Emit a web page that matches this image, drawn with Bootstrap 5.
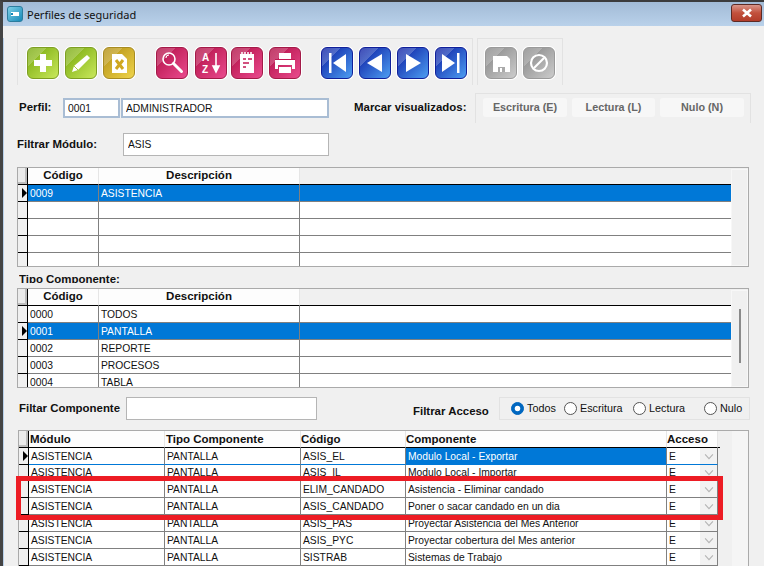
<!DOCTYPE html>
<html lang="es">
<head>
<meta charset="utf-8">
<title>Perfiles de seguridad</title>
<link href="https://cdn.jsdelivr.net/npm/bootstrap@5.3.0/dist/css/bootstrap.min.css" rel="stylesheet">
<style>
html,body{margin:0;background:#f0f0f0;}
body{font-family:"Liberation Sans",Arial,sans-serif;font-size:10.3px;color:#111;overflow:hidden;}
.win{width:764px;height:566px;overflow:hidden;position:relative;background:#f0f0f0;border-top:2px solid #3c3c3c;border-left:3px solid #444;}
.ttl{height:24px;background:linear-gradient(#a2bbd6,#b9d1ea);padding:0 2px 0 4px;}
.ttl-ic{width:16px;height:16px;border-radius:3px;background:linear-gradient(135deg,#7fd0e6,#1689b8);border:1px solid #2c7d9e;}
.ttl-tx{font-family:"Noto Sans",sans-serif;font-size:11px;margin:2px 0 0 4px;color:#111;}
.x-btn{width:31px;height:18px;margin-top:-3px;border-radius:3px;border:1px solid #5d2a24;background:linear-gradient(#d9968a,#c2503c 50%,#b23c2a);padding:0;line-height:0;}
.body-a{border-left:1px solid #b9d1ea;height:540px;}
.tb-wrap{margin:12px 0 0 13px;gap:4px;height:47px;}
.tb-grp{border:2px solid #e2e2e2;border-width:1px 1px 0 1px;padding:8px 0 0 9px;height:47px;}
.g1{width:456px;}.g2{width:86px;padding-left:7px;}
.tbb{width:32px;height:32px;padding:0;border-radius:6px;line-height:0;flex:none;box-shadow:0 0 0 1px #fff;}
.tbb svg{display:block;width:30px;height:30px;}
.tg{background:linear-gradient(135deg,rgba(255,255,255,.22) 0 30%,transparent 31%),linear-gradient(135deg,#76a80a,#c9e85c);border:1px solid #7e9f22;}
.ty{background:linear-gradient(135deg,rgba(255,255,255,.2) 0 30%,transparent 31%),linear-gradient(135deg,#b28e12,#efd44c);border:1px solid #a88c22;}
.tp{background:linear-gradient(135deg,rgba(255,255,255,.2) 0 30%,transparent 31%),linear-gradient(135deg,#b10f45,#ea4b8e);border:1px solid #a31a48;}
.tb{background:linear-gradient(135deg,rgba(255,255,255,.22) 0 30%,transparent 31%),linear-gradient(135deg,#0c1ca2,#4d9ef2);border:1px solid #10209a;}
.tn{background:linear-gradient(135deg,rgba(255,255,255,.22) 0 30%,transparent 31%),linear-gradient(135deg,#858585,#cccccc);border:1px solid #9a9a9a;}
.m7{margin-left:7px;}.m4{margin-left:4px;}.m6{margin-left:6px;}.m21{margin-left:21px;}.m20{margin-left:20px;}
.lbl{font-weight:700;font-size:11.45px;color:#111;white-space:nowrap;}
.r-perf{margin:8px 0 0 15px;height:30px;}
.w44{width:44px;}
.fc{height:20px;min-height:0;border-radius:0;padding:0 3px;font-size:10.3px;line-height:16px;color:#111;background:#fff;font-family:inherit;}
.fc-a{border:2px solid #a9bdd4;}
.i1{width:57px;}.i2{width:208px;margin-left:1px;}
.marc{margin-left:25px;width:121px;}
.mbox{width:276px;height:30px;border:1px solid #e2e2e2;border-bottom:0;padding:4px 6px 0 7px;gap:5px;align-items:flex-start;}
.mbtn{height:19px;padding:0;border:0;border-radius:3px;background:#f7f7f7;color:#666;font-size:10.8px;font-weight:700;line-height:19px;font-family:inherit;}
.mb1{width:84px;}.mb2{width:83px;}.mb3{width:84px;}
.r-fm{margin:10px 0 0 13px;height:23px;}
.w106{width:106px;padding-top:1px;}
.i3{width:206px;height:23px;border:1px solid #b5b5b5;padding:0 4px;}
.gr{margin:11px 0 0 13px;width:732px;height:100px;border:1px solid #aaa;background:#f0f0f0;overflow:hidden;}
.gtw{width:713px;flex:none;overflow:hidden;}
.sbar{width:17px;flex:none;border:1px solid #f7f7f7;position:relative;margin-top:1px;}
.thumb{position:absolute;left:7px;top:18px;width:2px;height:54px;background:#8a8a8a;}
table.gd{table-layout:fixed;border-collapse:separate;border-spacing:0;margin:0;width:713px;--bs-table-bg:transparent;}
table.gd th,table.gd td{height:17px;padding:1px 0 0 2px;line-height:15px;font-size:10.3px;color:#111;white-space:nowrap;overflow:hidden;background:#fff;border:0;border-right:1px solid #808080;border-bottom:1px solid #808080;box-shadow:none;font-weight:400;}
table.gd th{font-size:11.5px;font-weight:700;background:#fdfdfd;border-right:1px solid #e6e6e6;border-bottom:1px solid #000;padding:0 0 2px 0;line-height:14px;}
table.gd th.rst{background:#f0f0f0;border-right:0;}
table.gd td.rst{border-right:0;}
table.gd th.ind{background:#ebebeb;border-right:1px solid #000;border-bottom:1px solid #000;box-shadow:inset -2px -2px 0 #bdbdbd;}
table.gd td.ind{background:#f0f0f0;border-right:1px solid #000;border-bottom:1px solid #000;padding:0;position:relative;}
table.gd tr.sel td:not(.ind){background:#0078d7;color:#fff;}
table.gd td.sel-c{background:#0078d7;color:#fff;}
.arr{position:absolute;right:0;top:3px;width:0;height:0;border-left:5px solid #000;border-top:5px solid transparent;border-bottom:5px solid transparent;}
.lb2{margin:5px 0 0 15px;height:11px;line-height:15px;overflow:hidden;}
.mt5a{margin-top:5px;}
.r-fl{margin:9px 0 0 15px;height:24px;}
.w107{width:107px;padding-top:3px;}
.i4{width:191px;height:23px;border:1px solid #b5b5b5;}
.fa-l{margin-left:96px;width:86px;padding-top:6px;}
.rbox{width:251px;height:23px;border:1px solid #e2e2e2;padding-left:11px;font-size:10.8px;position:relative;}
.rb{position:relative;display:inline-flex;align-items:center;gap:3px;height:21px;color:#111;white-space:nowrap;}
.rb .form-check-input{width:13px;height:13px;margin:0;flex:none;border:1px solid #555;background-color:#fff;}
.rb .form-check-input:checked{background-color:#0067c0;border-color:#0067c0;}
.w60{width:53px;}.w69{width:69px;}.w71{width:71px;}
.gr3{margin:9px 0 0 14px;width:731px;height:140px;border:1px solid #aaa;}
.gt3{width:701px;flex:none;overflow:hidden;}
.sb3{width:18px;flex:none;background:#f5f5f5;margin-left:12px;}
table.g3{width:701px;}
table.g3 td{padding-left:2px;}
table.g3 th{padding:0 0 0 1px;line-height:15px;text-align:left;}
table.g3 th:nth-child(n+4){padding-left:0;}
table.g3 th.pad{background:#f0f0f0;border-right:0;padding:0;}
table.g3 td.pad{background:#f0f0f0;border:0;padding:0;}
table.g3 tr.cur td:not(.ind):not(.pad){border-bottom-color:#0078d7;}
table.g3 tr.low td{height:16px;line-height:14px;}
table.g3 td.acc{position:relative;padding-left:2px;}
.cmb{position:absolute;right:0;top:0;bottom:0;width:17px;background:#f2f2f2;display:flex;align-items:center;justify-content:center;}
.cmb svg{width:10px;height:7px;}
.redb{position:absolute;left:13px;top:474px;width:707px;height:44px;border:5px solid #ed1c24;pointer-events:none;}
</style>
</head>
<body>
<div class="win">
  <div class="ttl d-flex align-items-center">
    <span class="ttl-ic d-flex align-items-center justify-content-center"><svg width="10" height="6" viewBox="0 0 10 6"><rect x="1" y="1" width="8" height="4" fill="#fff"/><rect x="1" y="2" width="2" height="2" fill="#1689b8"/></svg></span>
    <span class="ttl-tx">Perfiles de seguridad</span>
    <button class="x-btn ms-auto" aria-label="Cerrar"><svg width="14" height="10" viewBox="0 0 14 10"><path d="M3 1.500l8 7M11 1.500l-8 7" stroke="#fff" stroke-width="2.600" fill="none"/></svg></button>
  </div>
  <div class="body-a">
    <div class="d-flex tb-wrap">
      <div class="tb-grp g1 d-flex">
        <button class="btn tbb tg"><svg viewBox="0 0 30 30"><path d="M12 6h6v6h6v6h-6v6h-6v-6H6v-6h6z" fill="#fff"/></svg></button>
        <button class="btn tbb tg m6"><svg viewBox="0 0 30 30"><path d="M21 7l3 3-12 12-6 2 2-6z" fill="#fff"/><path d="M8 18l4 4" stroke="#a8cc3c" stroke-width="1"/></svg></button>
        <button class="btn tbb ty m6"><svg viewBox="0 0 30 30"><path d="M8 6h10l5 5v14H8z" fill="#fff"/><path d="M12 12l7 9M19 12l-7 9" stroke="#d0a820" stroke-width="3"/></svg></button>
        <button class="btn tbb tp m21"><svg viewBox="0 0 30 30"><circle cx="12" cy="11" r="6" fill="none" stroke="#fff" stroke-width="1.600"/><path d="M16.500 15.500l8 8" stroke="#fff" stroke-width="3" stroke-linecap="round"/><path d="M9 10a3 3 0 0 1 3-3" stroke="#fff" fill="none"/></svg></button>
        <button class="btn tbb tp m7"><svg viewBox="0 0 30 30"><text x="6" y="13" font-family="Liberation Sans" font-weight="700" font-size="10" fill="#fff">A</text><text x="6" y="25" font-family="Liberation Sans" font-weight="700" font-size="10" fill="#fff">Z</text><path d="M20 5v15M17 18l3 6 3-6z" stroke="#fff" stroke-width="1.600" fill="#fff"/></svg></button>
        <button class="btn tbb tp m4"><svg viewBox="0 0 30 30"><path d="M8 6h14v19H8z" fill="#fff"/><path d="M10 4v4M13 4v4M16 4v4M19 4v4" stroke="#fff" stroke-width="1.500"/><path d="M11 11h3M16 11h4M11 15h6M11 19h3" stroke="#c21a55" stroke-width="1.500"/></svg></button>
        <button class="btn tbb tp m6"><svg viewBox="0 0 30 30"><path d="M9 5h12v6H9z" fill="#fff"/><path d="M5 12h20v9h-3v-4H8v4H5z" fill="#fff"/><path d="M9 19h12v6H9z" fill="#fff"/><path d="M5 11.500h20" stroke="#c21a55"/></svg></button>
        <button class="btn tbb tb m20"><svg viewBox="0 0 30 30"><path d="M7 5h2.500v20H7z" fill="#fff"/><path d="M24 6v18L11 15z" fill="#fff"/></svg></button>
        <button class="btn tbb tb m6"><svg viewBox="0 0 30 30"><path d="M22 6v18L7 15z" fill="#fff"/></svg></button>
        <button class="btn tbb tb m6"><svg viewBox="0 0 30 30"><path d="M8 6v18l15-9z" fill="#fff"/></svg></button>
        <button class="btn tbb tb m6"><svg viewBox="0 0 30 30"><path d="M21 5h2.500v20H21z" fill="#fff"/><path d="M6 6v18l13-9z" fill="#fff"/></svg></button>
      </div>
      <div class="tb-grp g2 d-flex">
        <button class="btn tbb tn"><svg viewBox="0 0 30 30"><path d="M7 8h14l3 3v13H7z" fill="#fff"/><path d="M12 19h7v5h-7z" fill="#aaa"/><path d="M14 20h2v4h-2z" fill="#fff"/></svg></button>
        <button class="btn tbb tn m6"><svg viewBox="0 0 30 30"><circle cx="15" cy="15" r="8" fill="none" stroke="#fff" stroke-width="2.200"/><path d="M10 20L20 10" stroke="#fff" stroke-width="2.200"/></svg></button>
      </div>
    </div>

    <div class="d-flex align-items-center r-perf">
      <span class="lbl w44">Perfil:</span>
      <input class="form-control fc fc-a i1" value="0001" aria-label="Perfil">
      <input class="form-control fc fc-a i2" value="ADMINISTRADOR" aria-label="Nombre">
      <span class="lbl marc">Marcar visualizados:</span>
      <div class="d-flex mbox">
        <button class="btn mbtn mb1">Escritura (E)</button>
        <button class="btn mbtn mb2">Lectura (L)</button>
        <button class="btn mbtn mb3">Nulo (N)</button>
      </div>
    </div>

    <div class="d-flex align-items-center r-fm">
      <span class="lbl w106">Filtrar Módulo:</span>
      <input class="form-control fc i3" value="ASIS" aria-label="Filtrar Módulo">
    </div>

    <div class="d-flex gr">
      <div class="gtw">
        <table class="table gd">
          <colgroup><col style="width:10px"><col style="width:71px"><col style="width:201px"><col></colgroup>
          <thead><tr><th class="ind"></th><th class="text-center">Código</th><th class="text-center">Descripción</th><th class="rst"></th></tr></thead>
          <tbody>
            <tr class="sel"><td class="ind"><span class="arr"></span></td><td>0009</td><td>ASISTENCIA</td><td class="rst"></td></tr>
            <tr><td class="ind"></td><td></td><td></td><td class="rst"></td></tr>
            <tr><td class="ind"></td><td></td><td></td><td class="rst"></td></tr>
            <tr><td class="ind"></td><td></td><td></td><td class="rst"></td></tr>
            <tr><td class="ind"></td><td></td><td></td><td class="rst"></td></tr>
          </tbody>
        </table>
      </div>
      <div class="sbar"></div>
    </div>

    <div class="lbl lb2">Tipo Componente:</div>

    <div class="d-flex gr mt5a">
      <div class="gtw">
        <table class="table gd">
          <colgroup><col style="width:10px"><col style="width:71px"><col style="width:201px"><col></colgroup>
          <thead><tr><th class="ind"></th><th class="text-center">Código</th><th class="text-center">Descripción</th><th class="rst"></th></tr></thead>
          <tbody>
            <tr><td class="ind"></td><td>0000</td><td>TODOS</td><td class="rst"></td></tr>
            <tr class="sel"><td class="ind"><span class="arr"></span></td><td>0001</td><td>PANTALLA</td><td class="rst"></td></tr>
            <tr><td class="ind"></td><td>0002</td><td>REPORTE</td><td class="rst"></td></tr>
            <tr><td class="ind"></td><td>0003</td><td>PROCESOS</td><td class="rst"></td></tr>
            <tr><td class="ind"></td><td>0004</td><td>TABLA</td><td class="rst"></td></tr>
          </tbody>
        </table>
      </div>
      <div class="sbar"><div class="thumb"></div></div>
    </div>

    <div class="d-flex r-fl">
      <span class="lbl w107">Filtar Componente</span>
      <input class="form-control fc i4" aria-label="Filtar Componente">
      <span class="lbl fa-l">Filtrar Acceso</span>
      <div class="rbox d-flex align-items-center">
        <label class="rb w60"><input class="form-check-input" type="radio" name="ac" checked>Todos</label>
        <label class="rb w69"><input class="form-check-input" type="radio" name="ac">Escritura</label>
        <label class="rb w71"><input class="form-check-input" type="radio" name="ac">Lectura</label>
        <label class="rb"><input class="form-check-input" type="radio" name="ac">Nulo</label>
      </div>
    </div>

    <div class="d-flex gr gr3">
      <div class="gt3">
        <table class="table gd g3">
          <colgroup><col style="width:10px"><col style="width:136px"><col style="width:136px"><col style="width:105px"><col style="width:261px"><col style="width:51px"><col></colgroup>
          <thead><tr><th class="ind"></th><th>Módulo</th><th>Tipo Componente</th><th>Código</th><th>Componente</th><th>Acceso</th><th class="pad"></th></tr></thead>
          <tbody>
            <tr class="cur"><td class="ind"><span class="arr"></span></td><td>ASISTENCIA</td><td>PANTALLA</td><td>ASIS_EL</td><td class="sel-c">Modulo Local - Exportar</td><td class="acc">E<span class="cmb"><svg viewBox="0 0 9 6"><path d="M1 1l3.500 4L8 1" fill="none" stroke="#b5b5b5"/></svg></span></td><td class="pad"></td></tr>
            <tr class="low"><td class="ind"></td><td>ASISTENCIA</td><td>PANTALLA</td><td>ASIS_IL</td><td>Modulo Local - Importar</td><td class="acc">E<span class="cmb"><svg viewBox="0 0 9 6"><path d="M1 1l3.500 4L8 1" fill="none" stroke="#b5b5b5"/></svg></span></td><td class="pad"></td></tr>
            <tr><td class="ind"></td><td>ASISTENCIA</td><td>PANTALLA</td><td>ELIM_CANDADO</td><td>Asistencia - Eliminar candado</td><td class="acc">E<span class="cmb"><svg viewBox="0 0 9 6"><path d="M1 1l3.500 4L8 1" fill="none" stroke="#b5b5b5"/></svg></span></td><td class="pad"></td></tr>
            <tr><td class="ind"></td><td>ASISTENCIA</td><td>PANTALLA</td><td>ASIS_CANDADO</td><td>Poner o sacar candado en un dia</td><td class="acc">E<span class="cmb"><svg viewBox="0 0 9 6"><path d="M1 1l3.500 4L8 1" fill="none" stroke="#b5b5b5"/></svg></span></td><td class="pad"></td></tr>
            <tr><td class="ind"></td><td>ASISTENCIA</td><td>PANTALLA</td><td>ASIS_PAS</td><td>Proyectar Asistencia del Mes Anterior</td><td class="acc">E<span class="cmb"><svg viewBox="0 0 9 6"><path d="M1 1l3.500 4L8 1" fill="none" stroke="#b5b5b5"/></svg></span></td><td class="pad"></td></tr>
            <tr><td class="ind"></td><td>ASISTENCIA</td><td>PANTALLA</td><td>ASIS_PYC</td><td>Proyectar cobertura del Mes anterior</td><td class="acc">E<span class="cmb"><svg viewBox="0 0 9 6"><path d="M1 1l3.500 4L8 1" fill="none" stroke="#b5b5b5"/></svg></span></td><td class="pad"></td></tr>
            <tr><td class="ind"></td><td>ASISTENCIA</td><td>PANTALLA</td><td>SISTRAB</td><td>Sistemas de Trabajo</td><td class="acc">E<span class="cmb"><svg viewBox="0 0 9 6"><path d="M1 1l3.500 4L8 1" fill="none" stroke="#b5b5b5"/></svg></span></td><td class="pad"></td></tr>
          </tbody>
        </table>
      </div>
      <div class="sb3"></div>
    </div>
  </div>
  <div class="redb"></div>
</div>
<script src="https://cdn.jsdelivr.net/npm/bootstrap@5.3.0/dist/js/bootstrap.bundle.min.js"></script>
</body>
</html>
